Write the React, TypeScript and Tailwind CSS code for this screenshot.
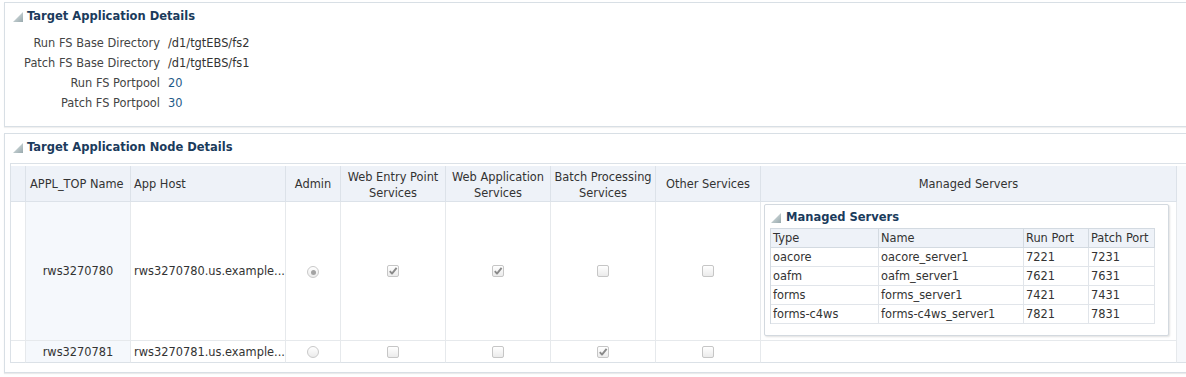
import React from "react";

const Tri = ({ id }: { id: string }) => (
  <svg width="10" height="10" viewBox="0 0 10 10" className="shrink-0">
    <defs>
      <linearGradient id={id} x1="0" y1="0" x2="1" y2="1">
        <stop offset="0" stopColor="#e3e9ea" />
        <stop offset="1" stopColor="#98a9ad" />
      </linearGradient>
    </defs>
    <polygon points="10,0 10,10 0,10" fill={`url(#${id})`} />
  </svg>
);

const Check = ({ checked }: { checked?: boolean }) => (
  <span className="relative inline-flex items-center justify-center w-[12px] h-[12px] rounded-[2px] border border-[#c6c6c6] bg-linear-to-b from-white to-[#ebebeb]">
    {checked && (
      <svg width="10" height="10" viewBox="0 0 10 10" className="absolute left-[0px] top-[0px]">
        <path d="M1.8 5.2 L4 7.6 L8.6 1.8" fill="none" stroke="#8a8a8a" strokeWidth="1.9" strokeLinejoin="round" />
      </svg>
    )}
  </span>
);

const Radio = ({ checked }: { checked?: boolean }) => (
  <span className="inline-flex items-center justify-center w-[12px] h-[12px] rounded-full border border-[#c9c9c9] bg-linear-to-b from-white to-[#ebebeb]">
    {checked && <span className="w-[5px] h-[5px] rounded-full bg-[#a3a3a3]" />}
  </span>
);

const hcell = "border-r border-b border-[#dce2e9] bg-[#eef2f8] flex items-center pt-[2px]";
const bcell = "border-r border-b border-[#e6e9ec] flex items-center pt-[2px]";
const ccell = "border-r border-b border-[#e6e9ec] flex items-center justify-center";

const servers = [
  ["oacore", "oacore_server1", "7221", "7231"],
  ["oafm", "oafm_server1", "7621", "7631"],
  ["forms", "forms_server1", "7421", "7431"],
  ["forms-c4ws", "forms-c4ws_server1", "7821", "7831"],
];

export default function App() {
  return (
    <div className="w-[1186px] h-[377px] overflow-hidden bg-white font-['DejaVu_Sans',sans-serif] text-[11.4px] text-[#333] leading-none">
      <div className="pt-[2px] pl-[4px]">
        {/* Panel 1 */}
        <section className="h-[125px] border-l border-t border-b border-[#d8dfe5] shadow-[0_1px_1px_rgba(0,0,0,0.06)]">
          <div className="flex items-center gap-[4px] h-[26px] pl-[8px] pt-[2px]">
            <Tri id="t1" />
            <h2 className="font-bold text-[11.5px] text-[#1b3b5c]">Target Application Details</h2>
          </div>
          <div className="mt-[5px] grid grid-cols-[155px_1fr] gap-x-[8px] auto-rows-[20px]">
            <span className="text-right self-center text-[#444]">Run FS Base Directory</span>
            <span className="self-center text-[#333]">/d1/tgtEBS/fs2</span>
            <span className="text-right self-center text-[#444]">Patch FS Base Directory</span>
            <span className="self-center text-[#333]">/d1/tgtEBS/fs1</span>
            <span className="text-right self-center text-[#444]">Run FS Portpool</span>
            <span className="self-center text-[#1e5a88]">20</span>
            <span className="text-right self-center text-[#444]">Patch FS Portpool</span>
            <span className="self-center text-[#1e5a88]">30</span>
          </div>
        </section>

        {/* Panel 2 */}
        <section className="mt-[6px] h-[240px] border-l border-t border-b border-[#d8dfe5] shadow-[0_1px_1px_rgba(0,0,0,0.08)]">
          <div className="flex items-center gap-[4px] h-[26px] pl-[8px] pt-[2px]">
            <Tri id="t2" />
            <h2 className="font-bold text-[11.5px] text-[#1b3b5c]">Target Application Node Details</h2>
          </div>
          <div className="mt-[3px] ml-[5px] border-t border-l border-[#dbe1e7] pt-[2px] grid grid-cols-[15px_105px_155px_55px_105px_105px_105px_105px_416px_1fr] grid-rows-[36px_auto_22px]">
            {/* header */}
            <div className={hcell} />
            <div className={`${hcell} pl-[4px]`}>APPL_TOP Name</div>
            <div className={`${hcell} pl-[3px]`}>App Host</div>
            <div className={`${hcell} justify-center`}>Admin</div>
            <div className={`${hcell} justify-center text-center leading-[16px]`}>Web Entry Point<br />Services</div>
            <div className={`${hcell} justify-center text-center leading-[16px]`}>Web Application<br />Services</div>
            <div className={`${hcell} justify-center text-center leading-[16px]`}>Batch Processing<br />Services</div>
            <div className={`${hcell} justify-center`}>Other Services</div>
            <div className={`${hcell} justify-center`}>Managed Servers</div>
            <div className="row-span-3 bg-[#f6f8fb] border-b border-[#dbe1e7]" />

            {/* row 1 */}
            <div className={bcell} />
            <div className={`${bcell} justify-center bg-[#f5f8fc]`}>rws3270780</div>
            <div className={`${bcell} pl-[3px]`}>rws3270780.us.example...</div>
            <div className={ccell}><span className="mt-[2px]"><Radio checked /></span></div>
            <div className={ccell}><Check checked /></div>
            <div className={ccell}><Check checked /></div>
            <div className={ccell}><Check /></div>
            <div className={ccell}><Check /></div>
            <div className="border-r border-b border-[#e6e9ec] flex items-start pt-[2px] pl-[3px] pb-[4px]">
              <div className="w-[405px] h-[132px] border border-[#d3d9df] rounded-[2px] shadow-[1px_1px_2px_rgba(0,0,0,0.12)] bg-white">
                <div className="flex items-center gap-[5px] h-[23px] pl-[6px] pt-[2px]">
                  <Tri id="t3" />
                  <h3 className="font-bold text-[11.5px] text-[#1b3b5c]">Managed Servers</h3>
                </div>
                <div className="ml-[5px] w-[385px] border-l border-t border-[#d3dae1] grid grid-cols-[108px_145px_65px_1fr] auto-rows-[19px]">
                  {["Type", "Name", "Run Port", "Patch Port"].map((h) => (
                    <div key={h} className="border-r border-b border-[#d3dae1] bg-[#eef2f8] flex items-center pl-[2px] pt-[2px]">{h}</div>
                  ))}
                  {servers.map((r) =>
                    r.map((c, i) => (
                      <div key={r[0] + i} className="border-r border-b border-[#e1e5ea] flex items-center pl-[2px] pt-[2px]">{c}</div>
                    ))
                  )}
                </div>
              </div>
            </div>

            {/* row 2 */}
            <div className={`${bcell} border-b-[#dbe1e7]`} />
            <div className={`${bcell} border-b-[#dbe1e7] justify-center bg-[#f5f8fc]`}>rws3270781</div>
            <div className={`${bcell} border-b-[#dbe1e7] pl-[3px]`}>rws3270781.us.example...</div>
            <div className={`${ccell} border-b-[#dbe1e7]`}><Radio /></div>
            <div className={`${ccell} border-b-[#dbe1e7]`}><Check /></div>
            <div className={`${ccell} border-b-[#dbe1e7]`}><Check /></div>
            <div className={`${ccell} border-b-[#dbe1e7]`}><Check checked /></div>
            <div className={`${ccell} border-b-[#dbe1e7]`}><Check /></div>
            <div className={`${bcell} border-b-[#dbe1e7]`} />
          </div>
        </section>
      </div>
    </div>
  );
}
